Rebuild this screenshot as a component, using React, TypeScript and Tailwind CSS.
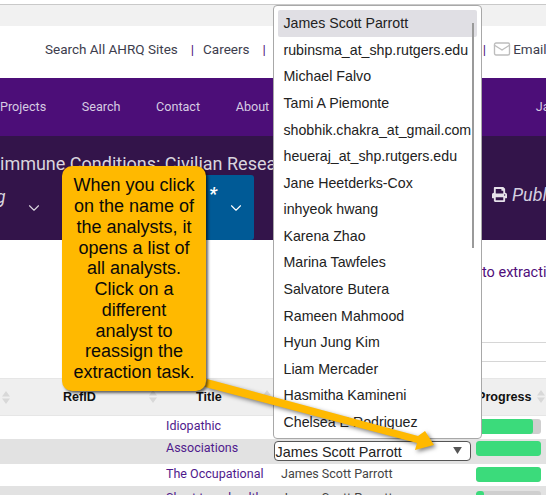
import { ChevronDown, Mail } from "lucide-react";
import { FaPrint } from "react-icons/fa";

const analysts = [
  "James Scott Parrott",
  "rubinsma_at_shp.rutgers.edu",
  "Michael Falvo",
  "Tami A Piemonte",
  "shobhik.chakra_at_gmail.com",
  "heueraj_at_shp.rutgers.edu",
  "Jane Heetderks-Cox",
  "inhyeok hwang",
  "Karena Zhao",
  "Marina Tawfeles",
  "Salvatore Butera",
  "Rameen Mahmood",
  "Hyun Jung Kim",
  "Liam Mercader",
  "Hasmitha Kamineni",
  "Chelsea E Rodriguez",
];

const rows = [
  { title: "Idiopathic", height: "h-[23px]", bg: "bg-white", progress: 88, offset: "pb-[3px]" },
  { title: "Associations", height: "h-[25px]", bg: "bg-[#e2e2e2]", progress: 100, offset: "pb-[6px]" },
  { title: "The Occupational", height: "h-[22px]", bg: "bg-white", progress: 100, offset: "pb-[2px]" },
  { title: "Short term health", height: "h-[22px]", bg: "bg-[#e2e2e2]", progress: 12, offset: "pt-[2px]" },
];

function SortIcon() {
  return (
    <svg width="8" height="13" viewBox="0 0 8 13" className="shrink-0 text-[#d8d8d8]">
      <path d="M4 0 8 5.5H0Z M4 13 0 7.5H8Z" fill="currentColor" />
    </svg>
  );
}

export default function App() {
  return (
    <div className="relative h-[495px] w-[546px] overflow-hidden bg-white font-['Roboto',sans-serif]">
      {/* browser strip */}
      <div className="mt-1 h-[22px] border-t border-[#c9c9c9] bg-[#f1f1f1]" />

      {/* top links */}
      <div className="flex h-[52px] items-center whitespace-nowrap pb-[6px] pl-[45px] text-[13.5px] text-[#3d3d4d]">
        <span className="shrink-0">Search All AHRQ Sites</span>
        <span className="ml-[13px] shrink-0 text-[#4f0e7a]">|</span>
        <span className="ml-[9px] shrink-0">Careers</span>
        <span className="ml-[13px] shrink-0 text-[#4f0e7a]">|</span>
        <span className="ml-[217px] shrink-0 text-[#4f0e7a]">|</span>
        <Mail size={18} strokeWidth={1.8} className="ml-[7px] shrink-0 text-[#bdbdbd]" />
        <span className="ml-[2px] shrink-0">Email Updates</span>
      </div>

      {/* main nav */}
      <div className="flex h-[58px] items-center gap-[35.6px] whitespace-nowrap bg-[#4c0e78] pt-[1px] text-[12.6px] text-[#d6cbe2]">
        <span className="shrink-0">Projects</span>
        <span className="shrink-0">Search</span>
        <span className="shrink-0">Contact</span>
        <span className="shrink-0">About</span>
        <span className="ml-[231px] shrink-0">James</span>
      </div>

      {/* project band */}
      <div className="h-[104px] bg-[#33144a] pt-[17px] text-[#d9d5de]">
        <div className="whitespace-nowrap text-[18px] leading-[22px]">immune Conditions: Civilian Research</div>
        <div className="flex">
          <div className="flex h-[64px] w-[190px] shrink-0 pt-[12px]">
            <span className="-ml-[14px] text-[18px] italic leading-[20px]">ng</span>
            <ChevronDown size={18} strokeWidth={1.5} className="ml-[20px] mt-[12px] shrink-0 text-[#d9d5de]" />
          </div>
          <div className="flex h-[65px] w-[64px] shrink-0 rounded-[3px] bg-[#005a96] pl-[19px] pt-[9px] text-white">
            <span className="text-[18px] font-bold italic leading-[20px]">*</span>
            <ChevronDown size={18} strokeWidth={1.5} className="ml-[10px] mt-[15px] shrink-0" />
          </div>
          <div className="ml-[238px] flex shrink-0 pt-[9px]">
            <FaPrint size={15} className="mt-[3px] shrink-0 text-[#e6e1ea]" />
            <span className="ml-[5px] whitespace-nowrap text-[18px] italic leading-[22px] text-[#d4cfe0]">Publish</span>
          </div>
        </div>
      </div>

      {/* filter area */}
      <div className="h-[110px] pl-[482px] pt-[24px] text-[14.5px] text-[#4f0e7a]">
        <div className="whitespace-nowrap leading-[18px]">to extraction</div>
        <div className="mt-[60px] h-[20px] border-y border-[#d6d6d6]" />
      </div>

      {/* table */}
      <div className="mt-[28px] text-[12.5px]">
        <div className="flex h-[38px] items-center border-y border-[#e6e6e6] bg-[#efefef] font-['Liberation_Sans',sans-serif] text-[12.6px] font-bold text-[#111]">
          <div className="w-[63px] shrink-0 pl-[2px]">
            <SortIcon />
          </div>
          <div className="flex w-[133px] shrink-0 items-center justify-between pr-[39px]">
            RefID
            <SortIcon />
          </div>
          <div className="flex w-[281px] shrink-0 items-center">
            Title
            <span className="ml-[41px]">
              <SortIcon />
            </span>
          </div>
          <div className="flex w-[69px] shrink-0 items-center justify-between pr-[1px]">
            Progress
            <SortIcon />
          </div>
        </div>
        {rows.map((row, i) => (
          <div key={row.title} className={`flex items-center ${row.height} ${row.bg} ${row.offset}`}>
            <div className="ml-[166px] w-[115px] shrink-0 whitespace-nowrap text-[#4f1a8c]">{row.title}</div>
            <div className="w-[195px] shrink-0 whitespace-nowrap text-[#444]">{i === 1 ? "" : "James Scott Parrott"}</div>
            <div className="h-[15px] w-[65px] shrink-0 overflow-hidden rounded-[3px] bg-[#cfcfcf]">
              <div className="h-full rounded-[3px] bg-[#3bdb7b]" style={{ width: `${row.progress}%` }} />
            </div>
          </div>
        ))}
      </div>

      {/* open select */}
      <div className="absolute left-[274px] top-[441px] flex h-[20px] w-[197px] items-center justify-between rounded-[4px] border border-[#555] bg-white pl-[0.5px] pr-[8px] pt-[3px] font-['Liberation_Sans',sans-serif] text-[14.4px] text-[#222]">
        James Scott Parrott
        <svg width="9" height="7" viewBox="0 0 10 8" className="-mt-[4px]">
          <path d="M0 0H10L5 8Z" fill="#555" />
        </svg>
      </div>

      {/* dropdown list */}
      <div className="absolute left-[273px] top-[5px] h-[434px] w-[209px] rounded-[4px] border border-[#a8a8a8] bg-white p-[4px] font-['Liberation_Sans',sans-serif] text-[14.2px] text-[#222]">
        {analysts.map((name, i) => (
          <div
            key={name}
            className={`flex h-[26.6px] w-[199px] items-center whitespace-nowrap pl-[5.5px] pt-[1px] ${i === 0 ? "rounded-[2px] bg-[#e0dfe4]" : ""}`}
          >
            {name}
          </div>
        ))}
        <div className="absolute right-[7px] top-[17px] h-[225px] w-[2px] bg-[#9a9a9a]" />
      </div>

      {/* callout arrow */}
      <svg width="546" height="495" viewBox="0 0 546 495" className="absolute left-0 top-0 drop-shadow-[2px_2px_2px_rgba(0,0,0,0.5)]">
        <path d="M207 379 L205 387 L417 443 L415 450 L434 445 L425 431 L418 436 Z" fill="#ffb900" />
      </svg>

      {/* callout */}
      <div className="absolute left-[62px] top-[166px] flex h-[225px] w-[144px] items-center justify-center rounded-[10px] bg-[#ffb900] px-[10px] pt-[1px] text-center font-['Liberation_Sans',sans-serif] text-[18px] leading-[20.75px] text-[#0a0a0a] shadow-[2px_2px_3px_rgba(0,0,0,0.6)]">
        When you click on the name of the analysts, it opens a list of all analysts. Click on a different analyst to reassign the extraction task.
      </div>
    </div>
  );
}
